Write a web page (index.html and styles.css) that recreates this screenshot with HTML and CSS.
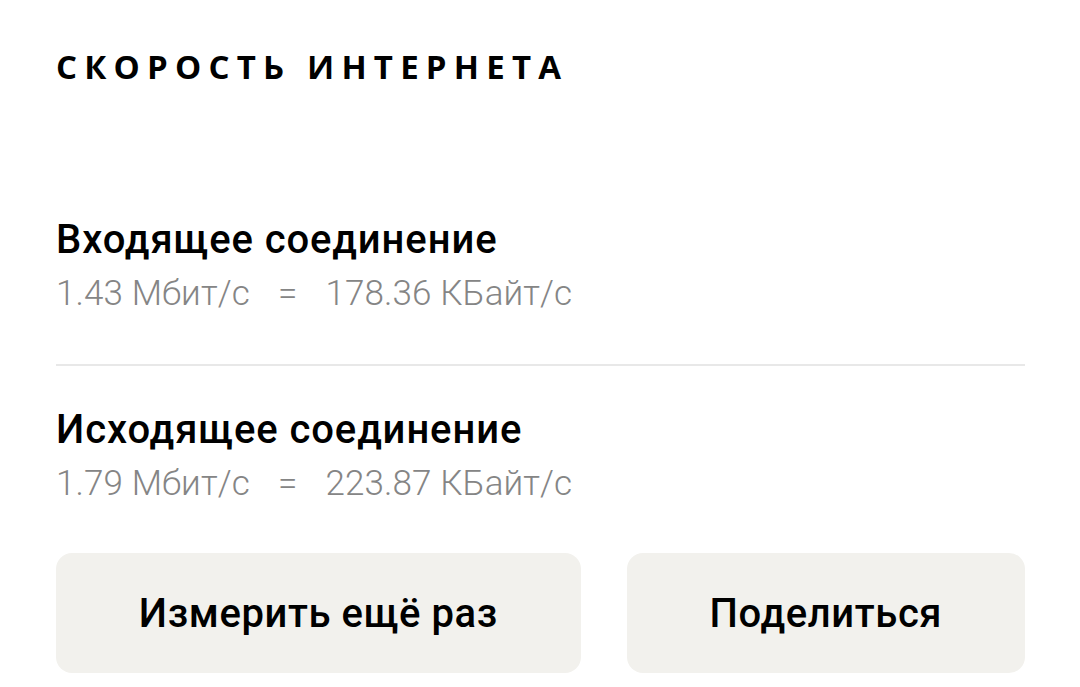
FILE: index.html
```html
<!DOCTYPE html>
<html lang="ru">
<head>
<meta charset="utf-8">
<link rel="stylesheet" href="styles.css">
</head>
<body>
<main class="page">
  <h1 class="title">СКОРОСТЬ ИНТЕРНЕТА</h1>
  <section class="stat stat-first">
    <h2 class="stat-name">Входящее соединение</h2>
    <div class="stat-values">
      <span class="v-mbit">1.43 Мбит/с</span>
      <span class="v-eq">=</span>
      <span class="v-kb">178.36 КБайт/с</span>
    </div>
  </section>
  <hr class="divider">
  <section class="stat">
    <h2 class="stat-name">Исходящее соединение</h2>
    <div class="stat-values">
      <span class="v-mbit">1.79 Мбит/с</span>
      <span class="v-eq">=</span>
      <span class="v-kb">223.87 КБайт/с</span>
    </div>
  </section>
  <div class="actions">
    <button class="btn">Измерить ещё раз</button>
    <button class="btn">Поделиться</button>
  </div>
</main>
</body>
</html>
```

FILE: styles.css
```css
html, body {
  margin: 0;
  padding: 0;
  background: #ffffff;
}
body {
  width: 1080px;
  height: 687px;
  overflow: hidden;
  font-family: Roboto, "Liberation Sans", sans-serif;
  color: #000;
}
.page {
  padding: 45px 55px 0 56px;
}
.title {
  margin: 0;
  font-family: "Open Sans", "Noto Sans", sans-serif;
  font-weight: 700;
  font-size: 33px;
  line-height: 44px;
  letter-spacing: 7.2px;
}
.stat-first {
  margin-top: 129px;
}
.stat-name {
  margin: 0;
  font-weight: 500;
  font-size: 40px;
  line-height: 44px;
  letter-spacing: 0.9px;
}
.stat-values {
  display: flex;
  gap: 28px;
  margin-top: 12px;
  font-weight: 300;
  font-size: 35px;
  line-height: 40px;
  color: #858585;
  letter-spacing: 0.1px;
}
.v-mbit {
  width: 194px;
}
.divider {
  margin: 50px 0 0 0;
  border: 0;
  height: 2px;
  background: #e8e8e8;
}
.divider + .stat {
  margin-top: 42px;
}
.actions {
  display: flex;
  gap: 46px;
  margin-top: 49px;
}
.btn {
  flex: 1 1 auto;
  height: 120px;
  padding: 0 81px;
  border: 0;
  border-radius: 16px;
  background: #f2f1ed;
  font-family: Roboto, "Liberation Sans", sans-serif;
  font-weight: 500;
  font-size: 40px;
  letter-spacing: 0.6px;
  color: #000;
  white-space: nowrap;
}
```
